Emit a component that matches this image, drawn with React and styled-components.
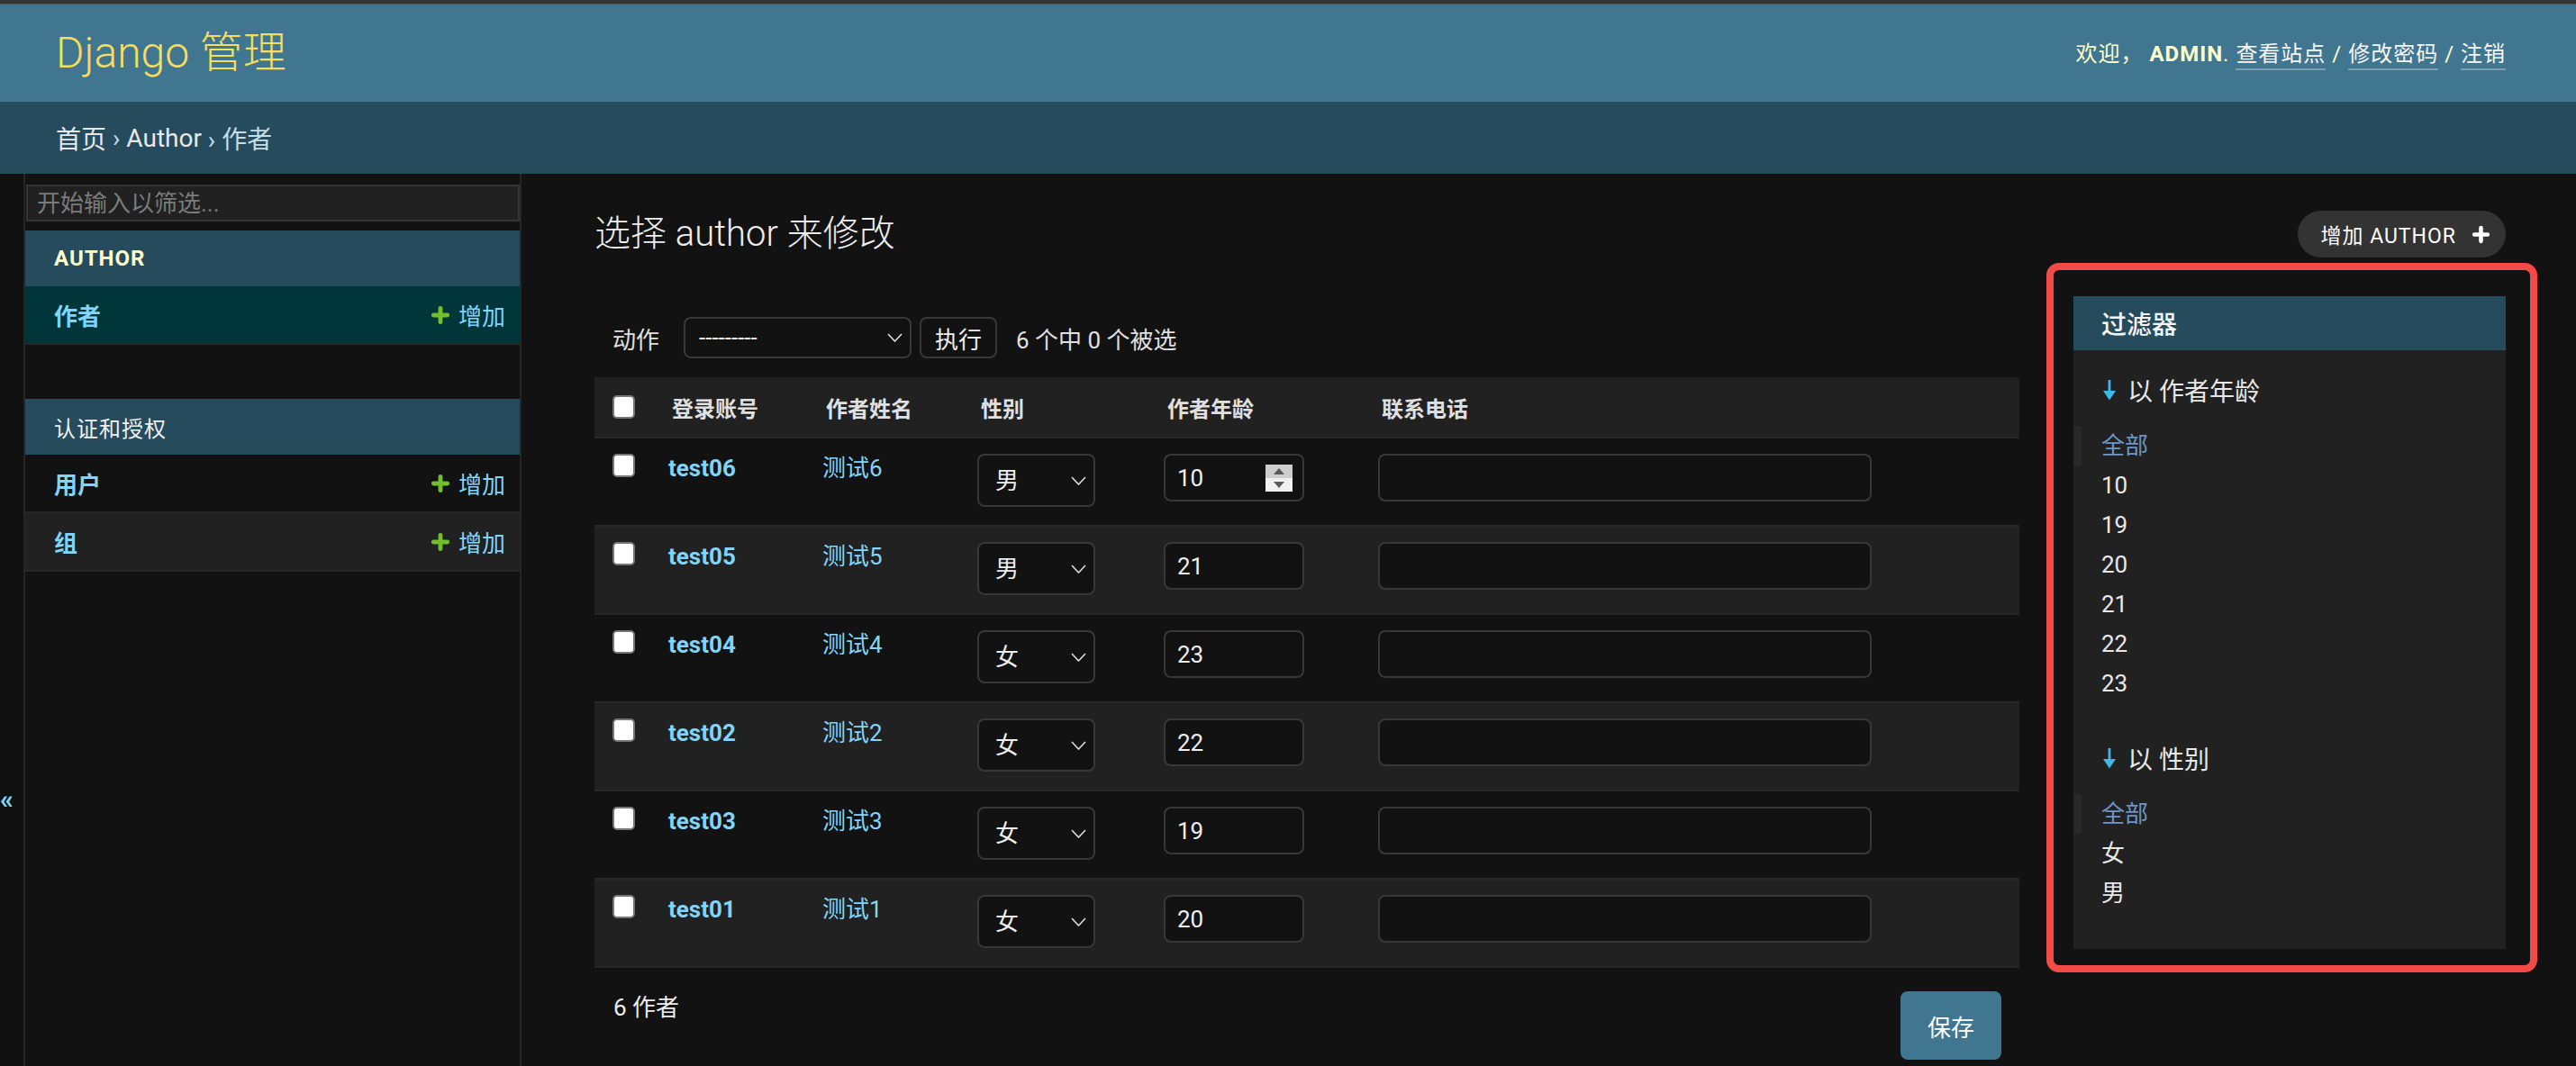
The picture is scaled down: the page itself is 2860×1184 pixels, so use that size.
import React from 'react';
import styled, { createGlobalStyle } from 'styled-components';

const GlobalStyle = createGlobalStyle`
  html, body {
    margin: 0;
    padding: 0;
    background: #121212;
  }
  body {
    font-family: Roboto, "Noto Sans CJK SC", sans-serif;
    color: #eeeeee;
  }
  * { box-sizing: border-box; }
`;

const authors = [
  { login: 'test06', name: '测试6', gender: '男', age: '10', spinner: true },
  { login: 'test05', name: '测试5', gender: '男', age: '21' },
  { login: 'test04', name: '测试4', gender: '女', age: '23' },
  { login: 'test02', name: '测试2', gender: '女', age: '22' },
  { login: 'test03', name: '测试3', gender: '女', age: '19' },
  { login: 'test01', name: '测试1', gender: '女', age: '20' },
];

const filters = [
  { title: '以 作者年龄', items: ['全部', '10', '19', '20', '21', '22', '23'] },
  { title: '以 性别', items: ['全部', '女', '男'] },
];

const COLS = '66px 171px 172px 207px 238px 1fr';

const Page = styled.div`
  width: 2860px;
  height: 1184px;
  overflow: hidden;
  display: flex;
  flex-direction: column;
`;

const TopStrip = styled.div`
  height: 5px;
  background: #343538;
  border-bottom: 1px solid #4d5357;
  flex-shrink: 0;
`;

const Header = styled.header`
  height: 108px;
  flex-shrink: 0;
  background: #417690;
  display: flex;
  align-items: center;
  justify-content: space-between;
  padding: 0 78px 0 62px;
`;

const Branding = styled.div`
  font-size: 48px;
  font-weight: 300;
  color: #f5dd5d;
  line-height: 1;
`;

const UserTools = styled.div`
  font-size: 24px;
  letter-spacing: 1px;
  color: #ffffcc;
  display: flex;
  align-items: baseline;
  white-space: pre;
`;

const Strong = styled.strong`
  font-weight: 700;
  text-transform: uppercase;
`;

const ToolLink = styled.a`
  color: #f7f7f7;
  text-decoration: none;
  border-bottom: 2px solid rgba(255, 255, 255, 0.3);
  padding-bottom: 1px;
`;

const Breadcrumbs = styled.div`
  height: 80px;
  flex-shrink: 0;
  background: #264b5d;
  display: flex;
  align-items: center;
  padding-left: 62px;
  font-size: 28px;
  color: #c4dce8;
  white-space: pre;
`;

const Crumb = styled.a`
  color: #e8e8e8;
  text-decoration: none;
`;

const Main = styled.div`
  flex: 1;
  display: flex;
  min-height: 0;
`;

const ToggleCol = styled.div`
  width: 28px;
  flex-shrink: 0;
  background: #101010;
  border-right: 2px solid #262626;
  padding-top: 680px;
  color: #81d4fa;
  font-size: 30px;
  font-weight: 700;
  line-height: 1;
`;

const Sidebar = styled.nav`
  width: 551px;
  flex-shrink: 0;
  border-right: 2px solid #262626;
  padding-top: 12px;
`;

const NavFilter = styled.input`
  display: block;
  width: calc(100% - 1px);
  margin: 0 0 10px 1px;
  height: 41px;
  background: #212121;
  border: 2px solid #353535;
  color: #eeeeee;
  font-family: inherit;
  font-size: 26px;
  padding: 0 10px;
  outline: none;
  &::placeholder {
    color: #7b7b7b;
  }
`;

const Module = styled.div`
  margin-bottom: 60px;
`;

const Caption = styled.div`
  height: 62px;
  background: #264b5d;
  display: flex;
  align-items: center;
  padding-left: 32px;
  font-size: 24px;
  letter-spacing: 1px;
  text-transform: uppercase;
  color: ${(p) => (p.$current ? '#ffffcc' : '#f0f0f0')};
  font-weight: ${(p) => (p.$current ? 700 : 400)};
`;

const NavRow = styled.div`
  height: 65px;
  background: ${(p) => p.$bg};
  border-bottom: 2px solid #272727;
  display: flex;
  align-items: center;
  justify-content: space-between;
  padding: 0 16px 0 32px;
`;

const NavLink = styled.a`
  color: #81d4fa;
  font-size: 26px;
  font-weight: 700;
  text-decoration: none;
`;

const AddLink = styled.a`
  display: flex;
  align-items: center;
  gap: 9px;
  color: #81d4fa;
  font-size: 26px;
  text-decoration: none;
`;

const Content = styled.main`
  flex: 1;
  padding: 41px 78px 0 81px;
  min-width: 0;
`;

const TitleRow = styled.div`
  height: 52px;
  display: flex;
  align-items: center;
  justify-content: space-between;
  margin-bottom: 43px;
`;

const Title = styled.h1`
  margin: 0;
  font-size: 40px;
  font-weight: 300;
  color: #eeeeee;
  line-height: 52px;
`;

const AddButton = styled.a`
  height: 52px;
  border-radius: 26px;
  background: #333333;
  color: #ffffff;
  display: flex;
  align-items: center;
  gap: 17px;
  padding: 0 17px 0 25px;
  font-size: 23px;
  letter-spacing: 1px;
  text-transform: uppercase;
  text-decoration: none;
`;

const ChangeList = styled.div`
  display: flex;
  align-items: flex-start;
  gap: 60px;
`;

const ListColumn = styled.div`
  flex: 1;
  min-width: 0;
`;

const Actions = styled.div`
  display: flex;
  align-items: center;
  padding: 23px 0 21px 20px;
  font-size: 26px;
  color: #e0e0e0;
`;

const ActionLabel = styled.span`
  margin-right: 27px;
`;

const SelectBox = styled.div`
  width: ${(p) => p.$w}px;
  height: ${(p) => p.$h}px;
  background: #121212;
  border: 2px solid #383838;
  border-radius: 8px;
  display: flex;
  align-items: center;
  justify-content: space-between;
  padding: 0 8px 0 ${(p) => p.$pl}px;
  font-size: 26px;
  color: #eeeeee;
  flex-shrink: 0;
`;

const GoButton = styled.button`
  margin-left: 9px;
  width: 86px;
  height: 46px;
  background: #121212;
  border: 2px solid #383838;
  border-radius: 8px;
  color: #eeeeee;
  font-family: inherit;
  font-size: 26px;
  padding: 0;
`;

const Counter = styled.span`
  margin-left: 21px;
`;

const HeadRow = styled.div`
  display: grid;
  grid-template-columns: ${COLS};
  height: 68px;
  align-items: center;
  background: #212121;
  border-bottom: 2px solid #272727;
`;

const Th = styled.div`
  padding-left: 20px;
  font-size: 24px;
  font-weight: 700;
  color: #e0e0e0;
`;

const Row = styled.div`
  display: grid;
  grid-template-columns: ${COLS};
  align-items: start;
  height: 98px;
  padding-top: 17px;
  background: ${(p) => (p.$alt ? '#212121' : '#121212')};
  border-bottom: 2px solid #272727;
`;

const Td = styled.div`
  padding-left: ${(p) => (p.$first ? 20 : 16)}px;
  font-size: 26px;
  line-height: 32px;
`;

const Check = styled.span`
  display: block;
  width: 25px;
  height: 26px;
  background: #ffffff;
  border: 2px solid #767676;
  border-radius: 5px;
`;

const RowLink = styled.a`
  color: #81d4fa;
  font-weight: ${(p) => (p.$bold ? 700 : 400)};
  text-decoration: none;
`;

const NumberBox = styled.div`
  width: 156px;
  height: 53px;
  background: #121212;
  border: 2px solid #383838;
  border-radius: 8px;
  display: flex;
  align-items: center;
  justify-content: space-between;
  padding: 0 11px 0 13px;
  font-size: 26px;
  color: #eeeeee;
`;

const TextInput = styled.input`
  display: block;
  width: 548px;
  height: 53px;
  background: #121212;
  border: 2px solid #383838;
  border-radius: 8px;
  outline: none;
`;

const Footer = styled.div`
  display: flex;
  align-items: flex-start;
  justify-content: space-between;
  padding: 26px 20px 0 21px;
`;

const Count = styled.span`
  font-size: 26px;
  line-height: 36px;
  color: #eeeeee;
`;

const SaveButton = styled.button`
  width: 112px;
  height: 76px;
  border: none;
  border-radius: 8px;
  background: #417690;
  color: #ffffff;
  font-family: inherit;
  font-size: 26px;
  padding: 0;
`;

const FilterPanel = styled.aside`
  position: relative;
  width: 480px;
  flex-shrink: 0;
  background: #212121;
  padding-bottom: 40px;
`;

const Highlight = styled.span`
  position: absolute;
  top: -37px;
  left: -30px;
  right: -35px;
  bottom: -26px;
  border: 8px solid #f24b47;
  border-radius: 14px;
  pointer-events: none;
`;

const FilterTitle = styled.h2`
  margin: 0;
  height: 60px;
  background: #264b5d;
  display: flex;
  align-items: center;
  padding-left: 31px;
  font-size: 28px;
  font-weight: 500;
  color: #f7f7f7;
`;

const FilterHeading = styled.h3`
  margin: ${(p) => (p.$first ? 26 : 43)}px 0 22px;
  height: 36px;
  display: flex;
  align-items: center;
  gap: 13px;
  padding-left: 33px;
  font-size: 28px;
  font-weight: 400;
  color: #e8e8e8;
`;

const FilterList = styled.ul`
  list-style: none;
  margin: 0;
  padding: 0;
`;

const FilterItem = styled.li`
  height: 44px;
  line-height: 44px;
  font-size: 26px;
  color: ${(p) => (p.$selected ? '#6f94c6' : '#e8e8e8')};
  border-left: ${(p) => (p.$selected ? '9px solid #292929' : 'none')};
  padding-left: ${(p) => (p.$selected ? 22 : 31)}px;
`;

const Plus = ({ color, size }) => (
  <svg width={size} height={size} viewBox="0 0 20 20">
    <path d="M10 3 V17 M3 10 H17" stroke={color} strokeWidth="4.4" strokeLinecap="round" fill="none" />
  </svg>
);

const Chevron = () => (
  <svg width="17" height="10" viewBox="0 0 17 10">
    <path d="M1 1 L8.5 9 L16 1" stroke="#dddddd" strokeWidth="1.6" fill="none" />
  </svg>
);

const DownArrow = () => (
  <svg width="14" height="23" viewBox="0 0 14 23">
    <path d="M7 0 V14" stroke="#3fb6ef" strokeWidth="2.8" />
    <path d="M0 12 H14 L7 22.5 Z" fill="#3fb6ef" />
  </svg>
);

const Spinner = () => (
  <svg width="30" height="30" viewBox="0 0 30 30">
    <rect x="0" y="0" width="30" height="15" fill="#cdcdcd" />
    <rect x="0" y="15" width="30" height="15" fill="#f0f0f0" />
    <path d="M9 11 L15 4 L21 11 Z" fill="#5a5a5a" />
    <path d="M9 19 L21 19 L15 26 Z" fill="#5a5a5a" />
  </svg>
);

const AuthorRow = ({ author, alt }) => (
  <Row $alt={alt}>
    <Td $first><Check /></Td>
    <Td><RowLink $bold href="#">{author.login}</RowLink></Td>
    <Td><RowLink href="#">{author.name}</RowLink></Td>
    <Td>
      <SelectBox $w={131} $h={59} $pl={18}>
        <span>{author.gender}</span>
        <Chevron />
      </SelectBox>
    </Td>
    <Td>
      <NumberBox>
        <span>{author.age}</span>
        {author.spinner && <Spinner />}
      </NumberBox>
    </Td>
    <Td><TextInput readOnly /></Td>
  </Row>
);

const App = () => {
  return (
    <Page>
      <GlobalStyle />
      <TopStrip />
      <Header>
        <Branding>Django 管理</Branding>
        <UserTools>
          欢迎， <Strong>admin</Strong>. <ToolLink href="#">查看站点</ToolLink> / <ToolLink href="#">修改密码</ToolLink> / <ToolLink href="#">注销</ToolLink>
        </UserTools>
      </Header>
      <Breadcrumbs>
        <Crumb href="#">首页</Crumb> › <Crumb href="#">Author</Crumb> › 作者
      </Breadcrumbs>
      <Main>
        <ToggleCol>«</ToggleCol>
        <Sidebar>
          <NavFilter placeholder="开始输入以筛选..." />
          <Module>
            <Caption $current>Author</Caption>
            <NavRow $bg="#00363a">
              <NavLink href="#">作者</NavLink>
              <AddLink href="#"><Plus color="#70bf2b" size={22} />增加</AddLink>
            </NavRow>
          </Module>
          <Module>
            <Caption>认证和授权</Caption>
            <NavRow $bg="#121212">
              <NavLink href="#">用户</NavLink>
              <AddLink href="#"><Plus color="#70bf2b" size={22} />增加</AddLink>
            </NavRow>
            <NavRow $bg="#212121">
              <NavLink href="#">组</NavLink>
              <AddLink href="#"><Plus color="#70bf2b" size={22} />增加</AddLink>
            </NavRow>
          </Module>
        </Sidebar>
        <Content>
          <TitleRow>
            <Title>选择 author 来修改</Title>
            <AddButton href="#">增加 author <Plus color="#ffffff" size={21} /></AddButton>
          </TitleRow>
          <ChangeList>
            <ListColumn>
              <Actions>
                <ActionLabel>动作</ActionLabel>
                <SelectBox $w={253} $h={46} $pl={15}>
                  <span>---------</span>
                  <Chevron />
                </SelectBox>
                <GoButton>执行</GoButton>
                <Counter>6 个中 0 个被选</Counter>
              </Actions>
              <HeadRow>
                <Th><Check /></Th>
                <Th>登录账号</Th>
                <Th>作者姓名</Th>
                <Th>性别</Th>
                <Th>作者年龄</Th>
                <Th>联系电话</Th>
              </HeadRow>
              {authors.map((a, i) => (
                <AuthorRow key={a.login} author={a} alt={i % 2 === 1} />
              ))}
              <Footer>
                <Count>6 作者</Count>
                <SaveButton>保存</SaveButton>
              </Footer>
            </ListColumn>
            <FilterPanel>
              <Highlight />
              <FilterTitle>过滤器</FilterTitle>
              {filters.map((f, i) => (
                <div key={f.title}>
                  <FilterHeading $first={i === 0}>
                    <DownArrow />
                    {f.title}
                  </FilterHeading>
                  <FilterList>
                    {f.items.map((item, j) => (
                      <FilterItem key={item} $selected={j === 0}>{item}</FilterItem>
                    ))}
                  </FilterList>
                </div>
              ))}
            </FilterPanel>
          </ChangeList>
        </Content>
      </Main>
    </Page>
  );
};

export default App;
